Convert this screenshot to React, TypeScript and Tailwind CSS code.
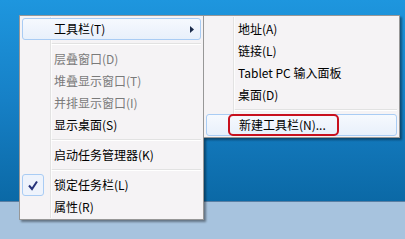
import { ReactNode } from 'react'

const font = { fontFamily: '"Microsoft YaHei", "Noto Sans CJK SC", "Noto Sans", sans-serif' }

type Item = { label: string; disabled?: boolean; hot?: boolean; checked?: boolean; arrow?: boolean; circled?: boolean } | 'sep'

const mainItems: Item[] = [
  { label: '工具栏(T)', hot: true, arrow: true },
  'sep',
  { label: '层叠窗口(D)', disabled: true },
  { label: '堆叠显示窗口(T)', disabled: true },
  { label: '并排显示窗口(I)', disabled: true },
  { label: '显示桌面(S)' },
  'sep',
  { label: '启动任务管理器(K)' },
  'sep',
  { label: '锁定任务栏(L)', checked: true },
  { label: '属性(R)' },
]

const subItems: Item[] = [
  { label: '地址(A)' },
  { label: '链接(L)' },
  { label: 'Tablet PC 输入面板' },
  { label: '桌面(D)' },
  'sep',
  { label: '新建工具栏(N)...', hot: true, circled: true },
]

function MenuRow({ item }: { item: Exclude<Item, 'sep'> }) {
  return (
    <div
      className={`relative flex h-[22px] items-center rounded-[3px] border ${
        item.hot
          ? 'border-[#a9ccf4] bg-gradient-to-b from-[#f6f9fe] to-[#e8f0fb]'
          : 'border-transparent'
      }`}
    >
      <div className="flex w-[31px] shrink-0 items-center justify-start self-stretch">
        {item.checked && (
          <div className="ml-[-1px] flex h-[22px] w-[22px] items-center justify-center rounded-[3px] border border-[#a9ccf4] bg-[#eef3fc]">
            <svg width="12" height="11" viewBox="0 0 12 11">
              <path d="M2 5.5 L5 9 L10 1.5" stroke="#27337a" strokeWidth="2" fill="none" />
            </svg>
          </div>
        )}
      </div>
      {item.circled ? (
        <span className="-ml-[10px] flex h-[22px] items-center rounded-[5px] border-2 border-[#c8101e] pl-[9px] pr-[11px] text-[12px] text-black">
          {item.label}
        </span>
      ) : (
        <span className={`text-[12px] ${item.disabled ? 'text-[#7a7a7a]' : 'text-black'}`}>{item.label}</span>
      )}
      {item.arrow && (
        <svg className="absolute right-[6px] top-[7px]" width="4" height="7" viewBox="0 0 4 7">
          <path d="M0 0 L4 3.5 L0 7 Z" fill="#1b2b4a" />
        </svg>
      )}
    </div>
  )
}

function Menu({ items, gutter, children }: { items: Item[]; gutter: number; children?: ReactNode }) {
  return (
    <div className="relative border border-[#979797] bg-[#f5f3f5] px-[2px] pb-[1px] pt-[2px] shadow-[2px_2px_2px_rgba(0,0,0,0.4)]">
      <div className="absolute bottom-[1px] top-[1px] w-[2px] border-l border-[#e2e2e2] bg-white/70" style={{ left: gutter }} />
      {items.map((item, i) =>
        item === 'sep' ? (
          <div key={i} className="flex h-[8px] items-center" style={{ paddingLeft: gutter - 2 }}>
            <div className="h-[2px] w-full border-t border-[#e2e2e2] bg-white" />
          </div>
        ) : (
          <MenuRow key={i} item={item} />
        )
      )}
      {children}
    </div>
  )
}

export default function App() {
  return (
    <div className="relative flex h-[239px] w-[405px] flex-col overflow-hidden" style={font}>
      <div className="flex-1 bg-gradient-to-b from-[#1e96de] via-[#1680c6] to-[#0b69a6]" />
      <div className="h-[38px] border-t border-[#5a7fa3] bg-[#a7c3de]" />

      <div className="absolute left-[19px] top-[15px] w-[185px]">
        <Menu items={mainItems} gutter={30} />
      </div>
      <div className="absolute left-[203px] top-[15px] w-[197px]">
        <Menu items={subItems} gutter={29} />
      </div>
    </div>
  )
}
